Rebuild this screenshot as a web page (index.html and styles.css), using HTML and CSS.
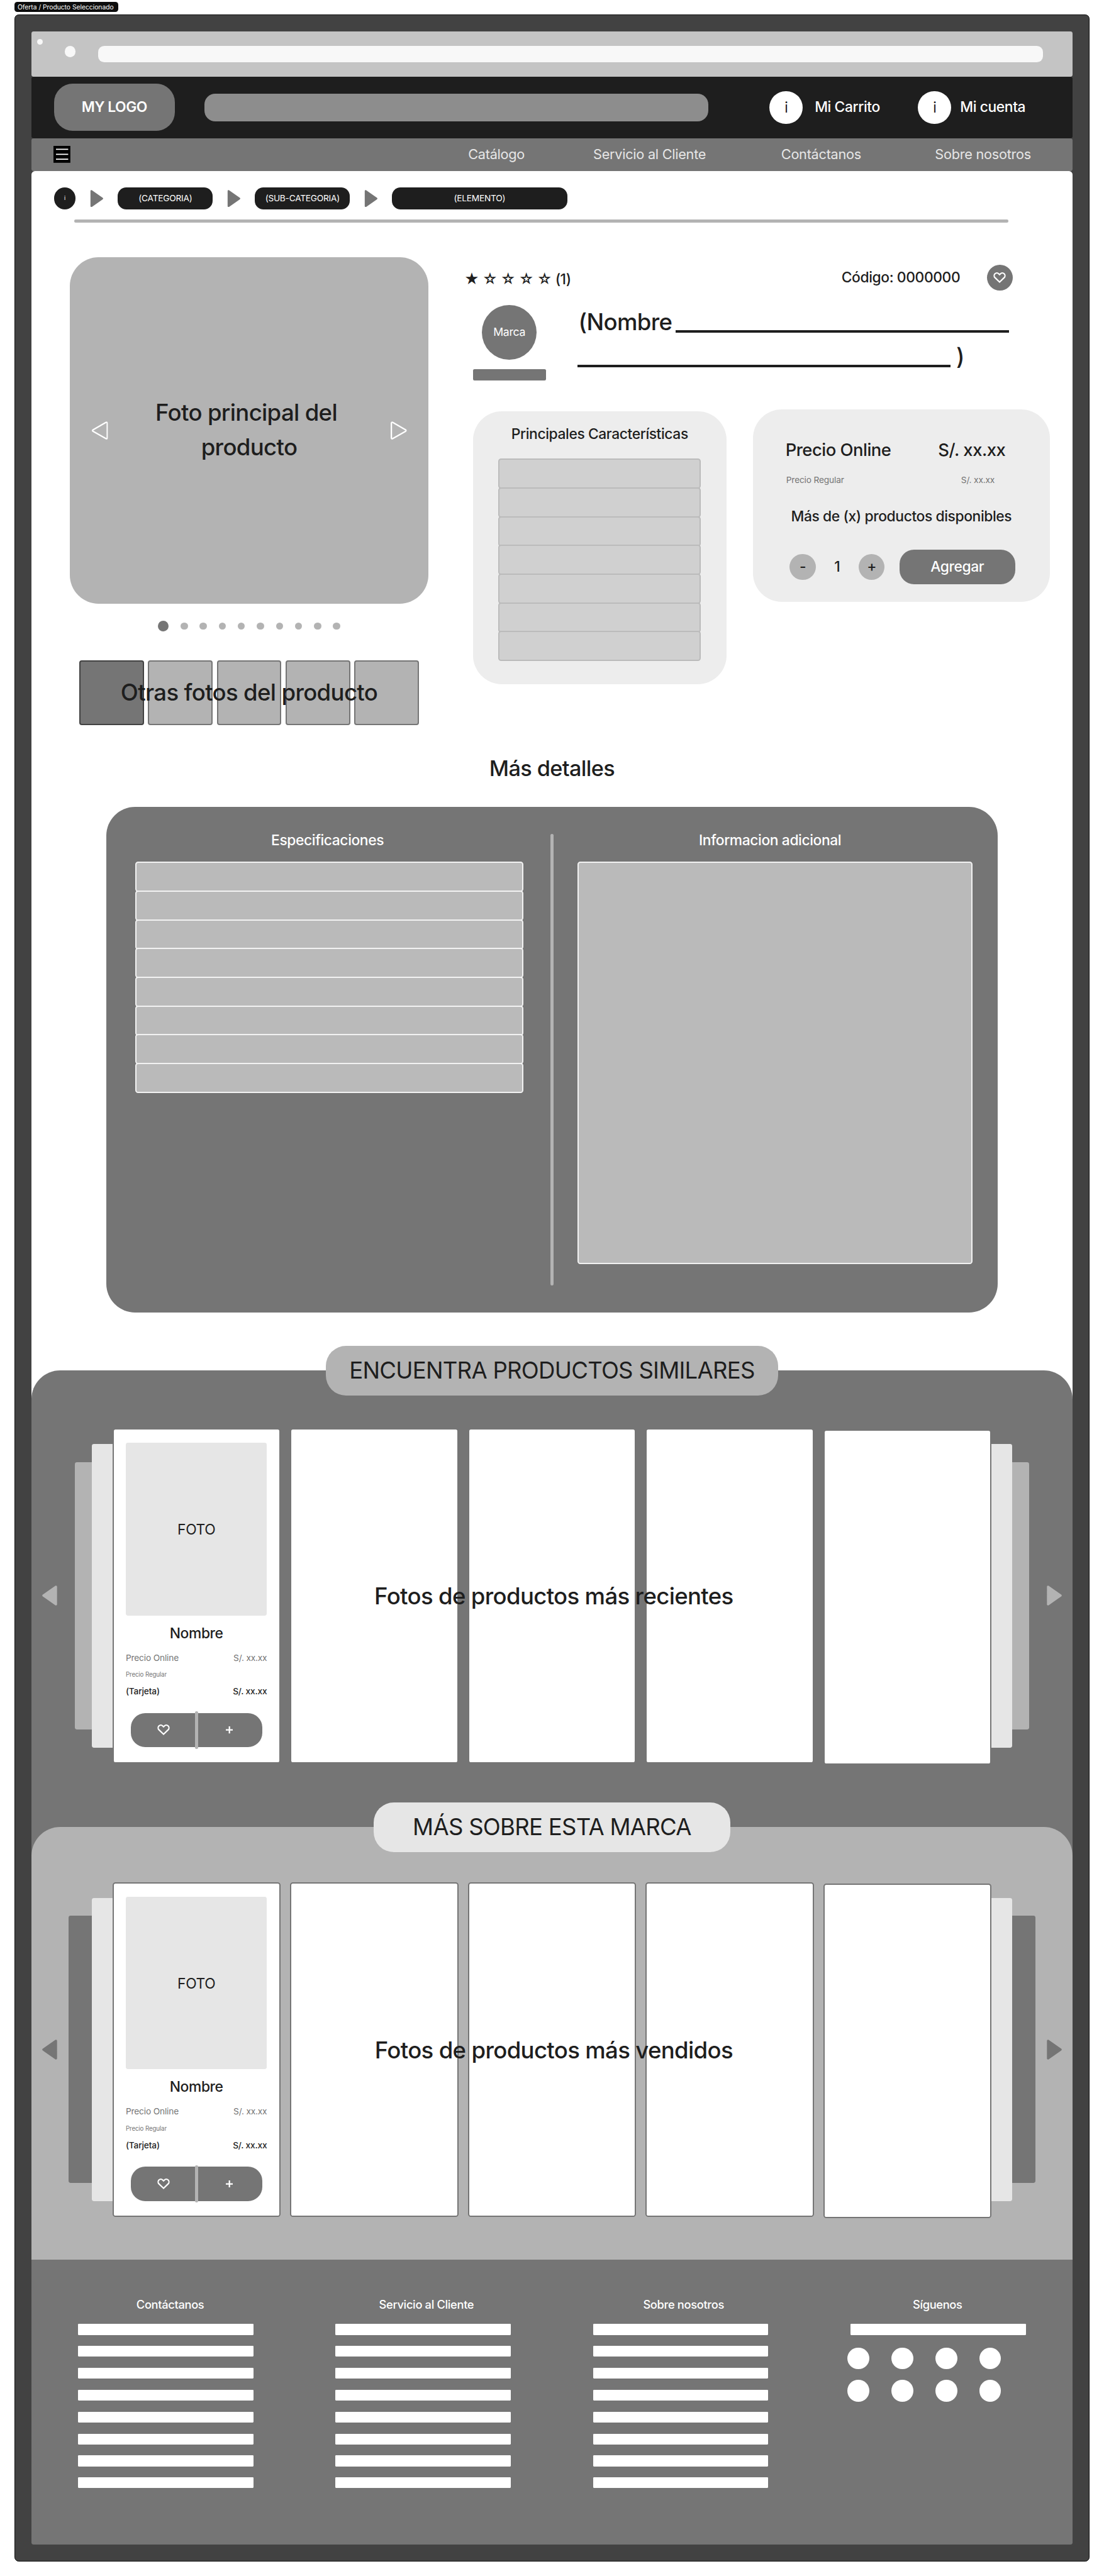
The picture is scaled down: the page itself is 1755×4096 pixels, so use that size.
FILE: index.html
```html
<!DOCTYPE html>
<html lang="es">
<head>
<meta charset="utf-8">
<title>Oferta / Producto Seleccionado</title>
<link rel="stylesheet" href="styles.css">
</head>
<body>
<svg class="defs" aria-hidden="true">
  <symbol id="heart" viewBox="0 0 35 30"><path d="M17.5 27.2 4.6 14.7A7.4 7.4 0 0 1 15.3 4.2L17.5 6.4 19.7 4.2A7.4 7.4 0 0 1 30.4 14.7Z" fill="none" stroke="currentColor" stroke-width="3.8"/></symbol>
  <symbol id="plus" viewBox="0 0 20 20"><path d="M10 0V20M0 10H20" stroke="currentColor" stroke-width="4"/></symbol>
  <symbol id="play" viewBox="0 0 42 56"><path d="M3.5 3.5 38.5 28 3.5 52.5Z" fill="currentColor" stroke="currentColor" stroke-width="6" stroke-linejoin="round"/></symbol>
  <symbol id="play-line" viewBox="0 0 45 51"><path d="M2 6Q2 1 6.2 3.2L41 23Q45.5 25.5 41 28L6.2 47.8Q2 50 2 45Z" fill="none" stroke="currentColor" stroke-width="4"/></symbol>
</svg>

<div class="frame-label">Oferta / Producto Seleccionado</div>
<div class="frame">
  <div class="browser-bar">
    <span class="dot-small"></span>
    <span class="dot-big"></span>
    <span class="address"></span>
  </div>

  <header class="header">
    <div class="logo">MY LOGO</div>
    <div class="search"></div>
    <a class="account cart"><span class="account-icon">i</span><span>Mi Carrito</span></a>
    <a class="account user"><span class="account-icon">i</span><span>Mi cuenta</span></a>
  </header>

  <nav class="nav">
    <svg class="menu" viewBox="0 0 47 47"><path d="M0 0H47V47H0Z" fill="#000"/><path d="M7 9.5H41M7 23.5H41M7 37H41" stroke="#fff" stroke-width="3"/></svg>
    <a>Catálogo</a><a>Servicio al Cliente</a><a>Contáctanos</a><a>Sobre nosotros</a>
  </nav>

  <main class="content">
    <div class="crumbs">
      <span class="crumb home">i</span>
      <svg class="crumb-arrow"><use href="#play"/></svg>
      <span class="crumb">(CATEGORIA)</span>
      <svg class="crumb-arrow"><use href="#play"/></svg>
      <span class="crumb">(SUB-CATEGORIA)</span>
      <svg class="crumb-arrow"><use href="#play"/></svg>
      <span class="crumb wide">(ELEMENTO)</span>
    </div>
    <div class="crumb-rule"></div>

    <section class="product">
      <div class="gallery">
        <div class="photo">
          <svg class="photo-arrow flip"><use href="#play-line"/></svg>
          <p>Foto principal del&nbsp;<br>producto</p>
          <svg class="photo-arrow"><use href="#play-line"/></svg>
        </div>
        <div class="dots"><i class="on"></i><i></i><i></i><i></i><i></i><i></i><i></i><i></i><i></i><i></i></div>
        <div class="thumbs">
          <i class="on"></i><i></i><i></i><i></i><i></i>
          <span>Otras fotos del producto</span>
        </div>
      </div>

      <div class="info">
        <div class="meta">
          <span class="rating">★ ☆ ☆ ☆ ☆ (1)</span>
          <span class="code">Código: 0000000</span>
          <span class="fav"><svg class="heart"><use href="#heart"/></svg></span>
        </div>
        <div class="naming">
          <div class="brand"><span class="brand-logo">Marca</span><span class="brand-bar"></span></div>
          <div class="name">
            <div class="name-line"><span>(Nombre</span><i></i></div>
            <div class="name-line second"><i></i><span>)</span></div>
          </div>
        </div>
        <div class="panels">
          <div class="features">
            <h3>Principales Características</h3>
            <div class="rows"><i></i><i></i><i></i><i></i><i></i><i></i><i></i></div>
          </div>
          <div class="price">
            <div class="price-main"><span>Precio Online</span><span>S/. xx.xx</span></div>
            <div class="price-regular"><span>Precio Regular</span><span>S/. xx.xx</span></div>
            <div class="stock">Más de (x) productos disponibles</div>
            <div class="buy">
              <span class="qty-btn">-</span><span class="qty">1</span><span class="qty-btn">+</span>
              <span class="add">Agregar</span>
            </div>
          </div>
        </div>
      </div>
    </section>

    <h2 class="details-title">Más detalles</h2>
    <section class="details">
      <div class="specs">
        <h3>Especificaciones</h3>
        <div class="rows light"><i></i><i></i><i></i><i></i><i></i><i></i><i></i><i></i></div>
      </div>
      <div class="details-rule"></div>
      <div class="extra">
        <h3>Informacion adicional</h3>
        <div class="extra-box"></div>
      </div>
    </section>

    <div class="shelves">
      <section class="shelf similar">
        <h2 class="pill">ENCUENTRA PRODUCTOS SIMILARES</h2>
        <div class="carousel">
          <svg class="arrow flip"><use href="#play"/></svg>
          <div class="stack">
            <i class="layer back left"></i><i class="layer front left"></i>
            <div class="cards">
              <article class="card">
                <div class="card-photo">FOTO</div>
                <h3>Nombre</h3>
                <p class="row online"><span>Precio Online</span><span>S/. xx.xx</span></p>
                <p class="row regular"><span>Precio Regular</span></p>
                <p class="row tarjeta"><span>(Tarjeta)</span><span>S/. xx.xx</span></p>
                <div class="actions"><span><svg class="heart"><use href="#heart"/></svg></span><span><svg class="plus"><use href="#plus"/></svg></span></div>
              </article>
              <article class="card"></article><article class="card"></article><article class="card"></article><article class="card"></article>
              <span class="caption">Fotos de productos más recientes</span>
            </div>
            <i class="layer front right"></i><i class="layer back right"></i>
          </div>
          <svg class="arrow"><use href="#play"/></svg>
        </div>
      </section>

      <section class="shelf marca">
        <h2 class="pill">MÁS SOBRE ESTA MARCA</h2>
        <div class="carousel">
          <svg class="arrow flip"><use href="#play"/></svg>
          <div class="stack">
            <i class="layer back left"></i><i class="layer front left"></i>
            <div class="cards">
              <article class="card">
                <div class="card-photo">FOTO</div>
                <h3>Nombre</h3>
                <p class="row online"><span>Precio Online</span><span>S/. xx.xx</span></p>
                <p class="row regular"><span>Precio Regular</span></p>
                <p class="row tarjeta"><span>(Tarjeta)</span><span>S/. xx.xx</span></p>
                <div class="actions"><span><svg class="heart"><use href="#heart"/></svg></span><span><svg class="plus"><use href="#plus"/></svg></span></div>
              </article>
              <article class="card"></article><article class="card"></article><article class="card"></article><article class="card"></article>
              <span class="caption">Fotos de productos más vendidos</span>
            </div>
            <i class="layer front right"></i><i class="layer back right"></i>
          </div>
          <svg class="arrow"><use href="#play"/></svg>
        </div>
      </section>
    </div>
  </main>

  <footer class="footer">
    <div class="col contact"><h4>Contáctanos</h4><i></i><i></i><i></i><i></i><i></i><i></i><i></i><i></i></div>
    <div class="col service"><h4>Servicio al Cliente</h4><i></i><i></i><i></i><i></i><i></i><i></i><i></i><i></i></div>
    <div class="col about"><h4>Sobre nosotros</h4><i></i><i></i><i></i><i></i><i></i><i></i><i></i><i></i></div>
    <div class="col follow"><h4>Síguenos</h4><i></i>
      <div class="social"><b></b><b></b><b></b><b></b><b></b><b></b><b></b><b></b></div>
    </div>
  </footer>
</div>
</body>
</html>
```
FILE: styles.css
```css
/* 1rem = 100 design units; the design is 3072 units wide */
html { font-size: calc(100vw / 30.72); }
* { box-sizing: border-box; margin: 0; padding: 0; }
body {
  padding: 0.06rem 0.4rem 0;
  background: #fff;
  color: #1e1e1e;
  font-family: Inter, "Liberation Sans", sans-serif;
  font-weight: 450;
  font-size: 0.4rem;
  line-height: 0.48rem;
  overflow: hidden;
  white-space: nowrap;
}
body * { letter-spacing: -0.018em; }
h2, h3, h4 { font-weight: 450; font-size: inherit; }
i, b { display: block; }
svg { display: block; flex: none; }
.defs { position: absolute; width: 0; height: 0; }
.flip { transform: scaleX(-1); }

.frame-label {
  width: 2.89rem; height: 0.28rem; padding-left: 0.09rem;
  border-radius: 0.08rem; background: #0d0d0d; color: #fff;
  font-size: 0.18rem; font-weight: 400; line-height: 0.28rem; letter-spacing: 0;
}
.frame {
  margin-top: 0.06rem; padding: 0.46rem;
  width: 29.92rem; height: 70.9rem;
  border: 0.02rem solid #0d0d0d; border-radius: 0.12rem;
  background: #424242;
}

.browser-bar { display: flex; height: 1.26rem; background: #c4c4c4; border-radius: 0.06rem; }
.dot-small { width: 0.16rem; height: 0.16rem; margin: 0.21rem 0 0 0.16rem; border-radius: 50%; background: #f8f8f8; }
.dot-big { width: 0.31rem; height: 0.31rem; margin: 0.4rem 0 0 0.6rem; border-radius: 50%; background: #f8f8f8; }
.address { width: 26.3rem; height: 0.455rem; margin: 0.4rem 0 0 0.62rem; border-radius: 0.17rem; background: #f8f8f8; }

.header { display: flex; align-items: center; height: 1.71rem; padding-left: 0.62rem; background: #1e1e1e; color: #fff; border-radius: 0.06rem; }
.logo { width: 3.37rem; height: 1.31rem; border-radius: 0.52rem; background: #757575; text-align: center; line-height: 1.31rem; font-weight: 600; letter-spacing: -0.022em; }
.search { width: 14.02rem; height: 0.76rem; margin: 0 1.7rem 0 0.83rem; border-radius: 0.3rem; background: #8d8d8d; }
.account { display: flex; align-items: center; width: 4.13rem; gap: 0.335rem; }
.account.user { gap: 0.25rem; }
.account-icon { width: 0.92rem; height: 0.92rem; border-radius: 50%; background: #fff; color: #1e1e1e; line-height: 0.92rem; text-align: center; font-weight: 400; }

.nav {
  display: grid; grid-template-columns: 11.54rem 3.48rem 5.23rem 4.28rem auto; align-items: center;
  height: 0.91rem; padding-left: 0.61rem; border-radius: 0.06rem;
  background: #757575; color: #e6e6e6; font-weight: 400; font-size: 0.38rem;
}
.nav a { letter-spacing: -0.012em; }
.menu { width: 0.47rem; height: 0.47rem; }

.content { height: 58.14rem; background: #fff; border-radius: 0.1rem 0.1rem 0 0; }
.crumbs { display: flex; align-items: center; gap: 0.38rem; padding: 0.46rem 0 0 0.62rem; }
.crumb { width: 2.64rem; height: 0.61rem; border-radius: 0.24rem; background: #1e1e1e; color: #fff; text-align: center; font-size: 0.24rem; line-height: 0.62rem; font-weight: 400; }
.crumb.home { width: 0.61rem; border-radius: 50%; font-size: 0.16rem; line-height: 0.6rem; }
.crumb.wide { width: 4.87rem; }
.crumb-arrow { width: 0.415rem; height: 0.48rem; color: #757575; }
.crumb-rule { width: 25.99rem; height: 0.08rem; margin: 0.29rem 0 0 1.19rem; border-radius: 0.04rem; background: #b3b3b3; }

.product { display: flex; height: 14.73rem; }
.gallery { display: flex; flex-direction: column; align-items: center; width: 9.97rem; margin: 0.96rem 0 0 1.07rem; }
.photo { display: flex; align-items: center; justify-content: space-between; width: 100%; height: 9.64rem; padding: 0 0.6rem; border-radius: 0.8rem; background: #b3b3b3; }
.photo p { font-size: 0.64rem; line-height: 0.96rem; text-align: center; }
.photo-arrow { width: 0.45rem; height: 0.51rem; color: #fff; }
.dots { display: flex; align-items: center; gap: 0.33rem; height: 0.3rem; margin-top: 0.48rem; }
.dots i { width: 0.2rem; height: 0.2rem; border-radius: 50%; background: #b3b3b3; }
.dots .on { width: 0.3rem; height: 0.3rem; background: #757575; }
.thumbs { position: relative; display: flex; gap: 0.11rem; margin-top: 0.8rem; }
.thumbs i { width: 1.8rem; height: 1.8rem; border: 0.04rem solid #757575; border-radius: 0.07rem; background: #b3b3b3; }
.thumbs .on { background: #757575; border-color: #424242; }
.thumbs span { position: absolute; inset: 0; text-align: center; font-size: 0.64rem; line-height: 1.8rem; }

.info { padding: 1.17rem 0 0 1.24rem; }
.meta { display: flex; align-items: center; height: 0.72rem; margin-left: -0.24rem; }
.rating { width: 10.5rem; padding-top: 0.11rem; letter-spacing: -0.022em; }
.code { width: 4.04rem; }
.fav { display: flex; align-items: center; justify-content: center; width: 0.72rem; height: 0.72rem; border-radius: 50%; background: #757575; color: #fff; }
.heart { width: 0.35rem; height: 0.3rem; }
.naming { display: flex; margin-top: 0.4rem; }
.brand { display: flex; flex-direction: column; align-items: center; gap: 0.265rem; width: 2.03rem; }
.brand-logo { width: 1.52rem; height: 1.52rem; border-radius: 50%; background: #757575; color: #fff; text-align: center; line-height: 1.52rem; font-size: 0.31rem; font-weight: 400; }
.brand-bar { width: 2.03rem; height: 0.32rem; border-radius: 0.04rem; background: #757575; }
.name { margin-left: 0.89rem; font-size: 0.64rem; line-height: 0.96rem; }
.name-line { display: flex; width: 12rem; height: 0.96rem; padding-left: 0.02rem; }
.name-line i { width: 9.27rem; height: 0.06rem; margin: 0.71rem 0 0 auto; background: #1e1e1e; flex: none; }
.name-line.second { padding-left: 0; }
.name-line.second i { width: 10.38rem; margin: 0.71rem 0.15rem 0 0; }
.panels { display: flex; align-items: flex-start; gap: 0.73rem; margin-top: 0.8rem; }
.features { width: 7.06rem; height: 7.6rem; margin-top: 0.06rem; padding: 0.4rem 0.71rem 0; border-radius: 0.8rem; background: #ededed; text-align: center; }
.features .rows { margin-top: 0.435rem; }
.rows i { height: 0.84rem; border: 0.04rem solid #bbb; border-radius: 0.08rem; background: #d0d0d0; }
.rows i + i { margin-top: -0.04rem; }
.price { width: 8.27rem; height: 5.36rem; padding: 0.84rem 1.24rem 0 0.91rem; border-radius: 0.8rem; background: #ededed; }
.price-main, .price-regular { display: flex; justify-content: space-between; }
.price-main { font-size: 0.48rem; line-height: 0.58rem; }
.price-regular { margin-top: 0.4rem; padding: 0 0.3rem 0 0.02rem; color: #757575; font-size: 0.24rem; line-height: 0.29rem; font-weight: 400; }
.price-regular span { letter-spacing: -0.012em; }
.stock { margin: 0.64rem -0.9rem 0 -0.57rem; text-align: center; }
.buy { display: flex; align-items: center; height: 0.96rem; margin: 0.68rem 0 0 0.12rem; }
.buy span { flex: none; }
.qty-btn { width: 0.72rem; height: 0.72rem; border-radius: 50%; background: #b3b3b3; text-align: center; line-height: 0.72rem; }
.qty { width: 1.2rem; text-align: center; }
.add { width: 3.22rem; margin-left: 0.41rem; border-radius: 0.4rem; background: #757575; color: #fff; text-align: center; line-height: 0.97rem; }

.details-title { text-align: center; font-size: 0.6rem; line-height: 0.96rem; }
.details { display: flex; width: 24.8rem; height: 14.08rem; margin: 0.57rem 0 0 2.08rem; padding: 0.7rem 0 0 0.8rem; border-radius: 0.8rem; background: #757575; }
.details h3 { color: #fff; text-align: center; margin-bottom: 0.34rem; padding-top: 0.01rem; }
.specs { width: 10.81rem; }
.specs h3 { padding-right: 0.1rem; }
.extra h3 { padding-right: 0.27rem; }
.rows.light i { border-color: #f2f2f2; background: #bababa; }
.details-rule { width: 0.08rem; height: 12.56rem; margin: 0.06rem 0.67rem 0 0.75rem; border-radius: 0.04rem; background: #b3b3b3; }
.extra-box { width: 10.99rem; height: 11.19rem; border: 0.04rem solid #f2f2f2; border-radius: 0.08rem; background: #bababa; }

.shelves { margin-top: 1.61rem; border-radius: 0.8rem 0.8rem 0 0; background: #757575; }
.shelf { display: flex; flex-direction: column; align-items: center; border-radius: 0.8rem 0.8rem 0 0; }
.similar { height: 12.71rem; }
.marca { height: 12.04rem; background: #b3b3b3; }
.pill { width: 12.58rem; margin-top: -0.69rem; border-radius: 0.56rem; background: #b3b3b3; text-align: center; font-size: 0.64rem; line-height: 1.38rem; flex: none; font-weight: 400; letter-spacing: -0.02em; }
.marca .pill { width: 9.91rem; background: #e6e6e6; }
.carousel { display: flex; align-items: center; justify-content: space-between; width: 28.37rem; margin-top: 0.92rem; }
.marca .carousel { margin-top: 0.84rem; }
.arrow { width: 0.42rem; height: 0.56rem; color: #b3b3b3; }
.marca .arrow { color: #757575; }
.stack { display: flex; align-items: center; }
.layer { width: 0.57rem; height: 8.44rem; background: #e6e6e6; }
.layer.back { width: 0.48rem; height: 7.44rem; background: #b3b3b3; }
.marca .layer.back { width: 0.64rem; background: #757575; }
.layer.left { border-radius: 0.06rem 0 0 0.06rem; }
.layer.right { border-radius: 0 0.06rem 0.06rem 0; }
.cards { position: relative; display: flex; gap: 0.268rem; }
.card { width: 4.68rem; height: 9.32rem; padding: 0.37rem 0.34rem 0; border: 0.04rem solid #757575; border-radius: 0.08rem; background: #fff; }
.card:nth-child(5) { transform: translateY(0.035rem); }
.card-photo { height: 4.8rem; border-radius: 0.06rem; background: #e6e6e6; text-align: center; line-height: 4.84rem; font-weight: 400; }
.card h3 { margin-top: 0.265rem; text-align: center; }
.row { display: flex; justify-content: space-between; font-size: 0.24rem; line-height: 0.29rem; }
.row span { letter-spacing: -0.012em; }
.row.online { margin-top: 0.295rem; color: #757575; font-weight: 400; }
.row.regular { margin-top: 0.22rem; color: #757575; font-weight: 400; font-size: 0.17rem; line-height: 0.2rem; }
.row.tarjeta { margin-top: 0.225rem; }
.actions { position: relative; display: flex; height: 0.96rem; margin: 0.45rem 0.13rem 0 0.14rem; border-radius: 0.4rem; background: #757575; color: #fff; }
.actions span { display: flex; flex: 1; align-items: center; justify-content: center; }
.actions::after { content: ""; position: absolute; left: 50%; top: -0.04rem; bottom: -0.04rem; width: 0.08rem; margin-left: -0.04rem; border-radius: 0.04rem; background: #b3b3b3; }
.plus { width: 0.2rem; height: 0.2rem; }
.caption { position: absolute; inset: 0 0 0 0.1rem; text-align: center; font-size: 0.64rem; line-height: 9.35rem; }

.footer { display: flex; gap: 2.285rem; height: 7.93rem; padding: 1.04rem 0 0 1.295rem; border-radius: 0 0 0.06rem 0.06rem; background: #757575; color: #fff; }
.col { width: 4.88rem; }
.col h4 { font-size: 0.32rem; line-height: 0.4rem; margin-bottom: 0.35rem; text-align: center; }
.contact h4 { padding-left: 0.25rem; }
.service h4 { padding-left: 0.18rem; }
.about h4 { padding-left: 0.16rem; }
.follow h4 { padding-right: 0.04rem; }
.col i { height: 0.3rem; border-radius: 0.02rem; background: #fff; }
.col i + i { margin-top: 0.31rem; }
.social { display: grid; grid-template-columns: repeat(4, 0.61rem); gap: 0.29rem 0.61rem; margin: 0.35rem 0 0 -0.08rem; }
.social b { height: 0.61rem; border-radius: 50%; background: #fff; }
```
